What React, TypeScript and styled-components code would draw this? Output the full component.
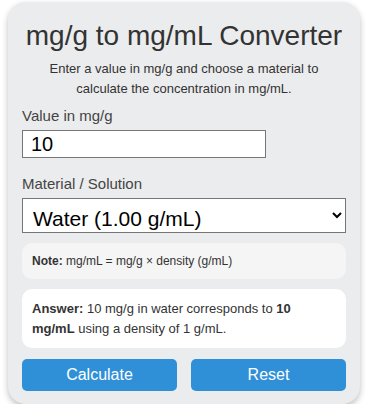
import React, { useState } from "react";
import styled, { createGlobalStyle } from "styled-components";

const GlobalStyle = createGlobalStyle`
  body {
    margin: 0;
    background: #ffffff;
    font-family: "Liberation Sans", Arial, sans-serif;
  }
`;

const Card = styled.div`
  width: 352px;
  margin: 2px 0 0 8px;
  padding: 14px 14px 13px;
  box-sizing: border-box;
  background: #ebeced;
  border-radius: 18px;
  box-shadow: 0 3px 6px rgba(0, 0, 0, 0.25);
  color: #333;
`;

const Title = styled.h1`
  margin: 4px 0 7px;
  font-size: 28px;
  font-weight: 400;
  text-align: center;
  color: #333;
`;

const Intro = styled.p`
  margin: 0 0 8px;
  font-size: 13px;
  line-height: 20px;
  text-align: center;
  color: #333;
`;

const Label = styled.label`
  display: block;
  margin: 0 0 6px;
  font-size: 15px;
  color: #444;
`;

const Field = styled.div`
  & + & {
    margin-top: 17px;
  }
`;

const TextInput = styled.input`
  box-sizing: border-box;
  width: 244px;
  height: 28px;
  padding: 0 8px;
  border: 1px solid #767676;
  font-family: inherit;
  font-size: 20px;
  color: #000;
  background: #fff;
`;

const Select = styled.select`
  box-sizing: border-box;
  width: 100%;
  height: 35px;
  padding: 5px 6px 0;
  border: 1px solid #767676;
  border-radius: 0;
  font-family: inherit;
  font-size: 21px;
  color: #000;
  background: #fff;
`;

const InfoBox = styled.div<{ $tone: "note" | "answer" }>`
  margin-top: 10px;
  padding: ${({ $tone }) => ($tone === "note" ? "10px" : "10px 10px 9px")};
  border-radius: 10px;
  background: ${({ $tone }) => ($tone === "note" ? "#f5f5f5" : "#ffffff")};
  font-size: ${({ $tone }) => ($tone === "note" ? "12px" : "13px")};
  line-height: ${({ $tone }) => ($tone === "note" ? "16px" : "20px")};
  color: #333;

  b {
    color: #333;
  }
`;

const ButtonRow = styled.div`
  display: grid;
  grid-template-columns: 1fr 1fr;
  gap: 14px;
  margin-top: 11px;
`;

const Button = styled.button`
  height: 32px;
  border: none;
  border-radius: 5px;
  background: #2f90d8;
  color: #fff;
  font-family: inherit;
  font-size: 16px;
  cursor: pointer;
`;

export default function App() {
  const [value, setValue] = useState("10");
  const [material, setMaterial] = useState("1");

  return (
    <>
      <GlobalStyle />
      <Card>
        <Title>mg/g to mg/mL Converter</Title>
        <Intro>
          Enter a value in mg/g and choose a material to
          <br />
          calculate the concentration in mg/mL.
        </Intro>
        <Field>
          <Label htmlFor="val">Value in mg/g</Label>
          <TextInput id="val" value={value} onChange={(e) => setValue(e.target.value)} />
        </Field>
        <Field>
          <Label htmlFor="mat">Material / Solution</Label>
          <Select id="mat" value={material} onChange={(e) => setMaterial(e.target.value)}>
            <option value="1">Water (1.00 g/mL)</option>
          </Select>
        </Field>
        <InfoBox $tone="note">
          <b>Note:</b> mg/mL = mg/g × density (g/mL)
        </InfoBox>
        <InfoBox $tone="answer">
          <b>Answer:</b> 10 mg/g in water corresponds to <b>10 mg/mL</b> using a density of 1 g/mL.
        </InfoBox>
        <ButtonRow>
          <Button>Calculate</Button>
          <Button>Reset</Button>
        </ButtonRow>
      </Card>
    </>
  );
}
